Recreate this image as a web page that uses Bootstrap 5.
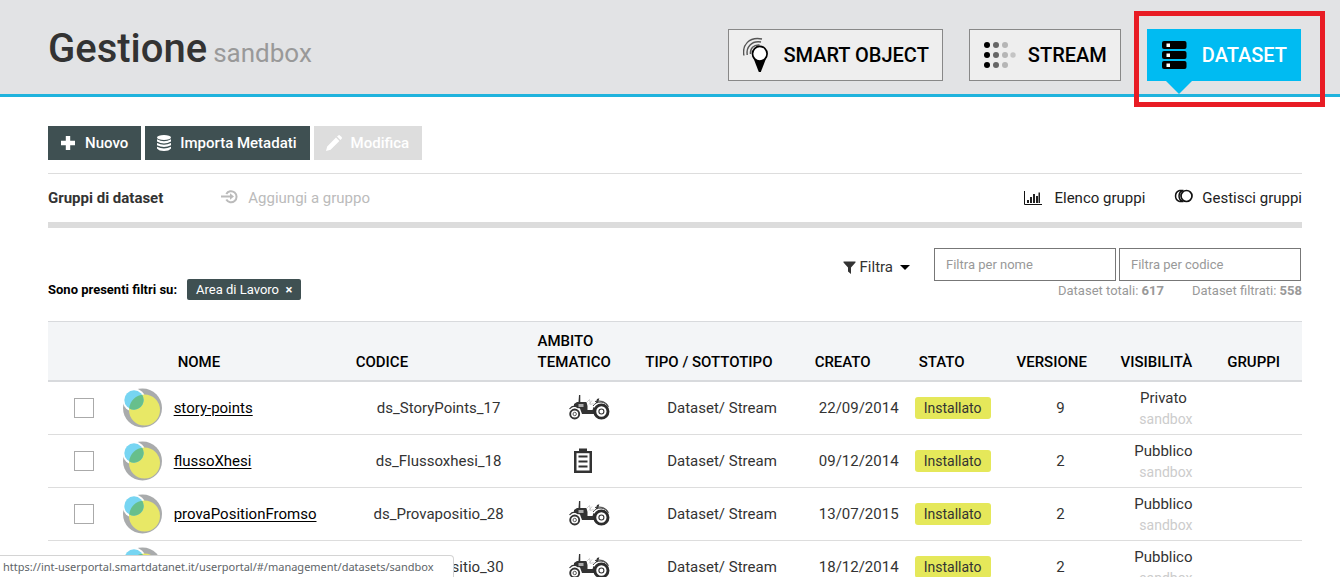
<!DOCTYPE html>
<html lang="it">
<head>
<meta charset="utf-8">
<meta name="viewport" content="width=device-width, initial-scale=1">
<title>Gestione dataset</title>
<link href="https://cdn.jsdelivr.net/npm/bootstrap@5.3.0/dist/css/bootstrap.min.css" rel="stylesheet">
<style>
html { scrollbar-width: none; }
body { font-family: Roboto, "Liberation Sans", sans-serif; font-size: 15px; line-height: 20px; color: #333; background: #fff; }
svg { flex: none; }
.page-pad { padding-left: 48px; padding-right: 38px; }
.page-head { background: #e2e3e5; border-bottom: 3px solid #1fb3dd; height: 97px; }
.page-title { display: flex; align-items: baseline; gap: 6px; font-size: 40px; line-height: 44px; font-weight: 500; color: #333; padding-top: 27px; }
.page-title small { font-size: 26px; font-weight: 400; color: #999; }
.section-tabs { gap: 26px; padding-top: 29px; padding-right: 1px; }
.tab-btn { display: flex; align-items: center; gap: 12px; height: 52px; padding: 0 13px 0 14px; border: 1px solid #888; border-radius: 0; background: #eee; color: #000; font-size: 20px; font-weight: 500; }
.tab-btn.current { background: #00bbf2; border-color: #00bbf2; color: #fff; }
.tab-arrow { position: absolute; top: 52px; left: 19px; border: 13px solid transparent; border-bottom: 0; border-top-color: #00bbf2; }
.focus-frame { position: absolute; inset: -18px -24px -26px -13px; border: 5px solid #e81c24; pointer-events: none; }
.tool-row { padding: 29px 0 13px; }
.tool-btn { display: flex; align-items: center; gap: 8px; height: 34px; padding: 0 13px 0 12px; border: 0; border-radius: 0; background: #3f5052; color: #fff; font-size: 15px; font-weight: 500; }
.tool-btn svg { margin-right: 1px; }
.tool-btn:disabled { background: #ddd; color: #fff; opacity: 1; }
.group-bar { height: 55px; border-top: 1px solid #ddd; border-bottom: 6px solid #dcdcdc; }
.group-bar a { color: #222; text-decoration: none; display: flex; align-items: center; gap: 9px; }
.group-bar a.off { color: #bbb; margin-left: 58px; }
.group-links { gap: 28px; }
.group-links a:first-child { gap: 12px; }
.filter-row { margin-top: 20px; margin-bottom: 21px; }
.filter-on { font-size: 13px; font-weight: 700; color: #000; gap: 10px; }
.filter-tag { background: #3f5052; color: #fff; border: 0; border-radius: 2px; font-size: 13px; height: 21px; padding: 0 9px; }
.filter-menu { border: 0; background: none; color: #333; padding: 0; margin-right: 24px; height: 38px; gap: 4px; }
.filter-menu.dropdown-toggle::after { margin-left: 3px; border-width: 5px; border-bottom: 0; color: #000; vertical-align: 0; }
.filter-inputs { gap: 3px; padding-right: 1px; }
.filter-input { width: 182px; height: 33px; border: 1px solid #777; border-radius: 0; font-size: 13px; padding: 0 11px; }
.filter-input::placeholder { color: #999; }
.totals { font-size: 13px; line-height: 19px; color: #999; gap: 28px; }
.data-grid { table-layout: fixed; margin: 0; color: #333; border-color: #ddd; text-align: center; }
.data-grid th { background: #f3f5f7; color: #000; font-weight: 500; line-height: 21px; text-align: left; vertical-align: bottom; padding: 9px 0 7px 8px; border-top: 1px solid #d8dadd; border-bottom: 2px solid #d8dadd; }
.data-grid td { height: 53px; padding: 0; vertical-align: middle; border-bottom: 1px solid #ddd; white-space: nowrap; }
.data-grid .logo-cell { padding-right: 5px; }
.data-grid .nome { text-align: left; padding-left: 4px; }
.data-grid .nome a { color: #000; text-underline-offset: 2px; }
.data-grid .stato { text-align: left; padding-left: 4px; }
.data-grid .vis { padding: 2px 5px 0 0; }
.pick { appearance: none; width: 20px; height: 20px; border: 1px solid #aaa; background: #fff; display: block; margin: 0 auto; }
.pick:checked { background: #3f5052; }
.topic { display: flex; width: 28px; margin: 0 auto; }
.state-pill { display: inline-block; background: #e5e85a; border-radius: 3px; font-size: 14px; line-height: 22px; padding: 0 9px; color: #333; }
.owner { display: block; font-size: 14px; color: #ccc; line-height: 22px; padding-left: 5px; }
.link-hint { left: 0; bottom: 0; height: 22px; padding: 0 19px 0 3px; font: 11px/22px "Noto Sans", sans-serif; color: #606468; background: #fff; border: 1px solid #d4d4d4; border-width: 1px 1px 0 0; border-radius: 0 4px 0 0; }
.c1 { width: 5.7%; } .c2 { width: 4%; } .c3 { width: 14.2%; } .c4 { width: 14.5%; } .c5 { width: 8.6%; } .c6 { width: 13.5%; }
.c7 { width: 8.3%; } .c8 { width: 7.8%; } .c9 { width: 8.3%; } .c10 { width: 8.5%; } .c11 { width: 6.6%; }
</style>
</head>
<body>
<svg class="d-none" aria-hidden="true">
  <symbol id="i-ds" viewBox="0 0 40 40">
    <circle cx="20.500" cy="20" r="19.500" fill="#a9abac"/>
    <circle cx="12" cy="12" r="11.500" fill="#fff"/>
    <circle cx="22.500" cy="22" r="15.500" fill="#e8e866"/>
    <circle cx="12" cy="12" r="9.700" fill="#77d5f2"/>
    <path d="M21.600 6.500A15.500 15.500 0 0 0 7.200 20.400 9.700 9.700 0 0 0 21.700 12 9.700 9.700 0 0 0 20.200 6.700Z" fill="#67bf8c"/>
  </symbol>
  <symbol id="i-tractor" viewBox="0 0 41 25">
    <path d="M10 0h1.300v7H9.500zM5 9l3-2h9.500l1 4v4h5l1-3 3 2v5H13L11 13.500 7 12H5zM28 4l2.300-.8L29 8h-2.200z" fill="#333"/>
    <path d="M9.500 9h5v3h-5z" fill="#aaa"/>
    <path d="M17.500 7.500 20.500 4.500l1 5 3-1M20 9.500l3-4" fill="none" stroke="#bbb" stroke-width=".7"/>
    <path d="M24 11a9 9 0 0 1 15.500 1M26 6.500q9-2 13 4" fill="none" stroke="#444" stroke-width="1"/>
    <path d="M.5 14q4-5 9-1" fill="none" stroke="#333" stroke-width="1.200"/>
    <circle cx="5.700" cy="19" r="4.500" fill="#fff" stroke="#333" stroke-width="1.900"/>
    <circle cx="5.700" cy="19" r="1.700" fill="#fff" stroke="#333" stroke-width=".8"/>
    <circle cx="32.400" cy="16.500" r="6.600" fill="#fff" stroke="#2c2c2c" stroke-width="2.900"/>
    <circle cx="32.400" cy="16.500" r="2.500" fill="#fff" stroke="#333" stroke-width="1.100"/>
  </symbol>
  <symbol id="i-clip" viewBox="0 0 20 26">
    <path d="M1 3h18v22H1zM6 .5h8V3H6z" fill="#333"/>
    <path d="M3.500 5.200h13v17.300h-13z" fill="#fff"/>
    <path d="M5.500 8.500h9M5.500 13.500h9M5.500 18.500h9" stroke="#333" stroke-width="2.200"/>
  </symbol>
</svg>

<header class="page-head page-pad d-flex justify-content-between">
  <h1 class="page-title m-0">Gestione <small>sandbox</small></h1>
  <nav class="section-tabs d-flex align-items-start" aria-label="Sezioni">
    <button type="button" class="tab-btn">
      <svg width="28" height="36" viewBox="0 0 28 36"><g fill="none" stroke="#555" stroke-width="1.400"><path d="M.9 18.500C-1 8 6 -.5 19 2"/><path d="M4.200 18C3 10 8.500 3.500 18 5"/><path d="M7.400 17C7 11.500 10.500 7.500 16.500 8"/></g><path d="M9.800 19.500h14l-6 15.500h-2z" fill="#000"/><circle cx="16.800" cy="16.700" r="7.300" fill="#fff" stroke="#000" stroke-width="1.700"/></svg>
      SMART OBJECT
    </button>
    <button type="button" class="tab-btn">
      <svg width="32" height="28" viewBox="0 0 32 28"><g fill="#000"><circle cx="3" cy="4" r="3"/><circle cx="3" cy="14" r="3"/><circle cx="3" cy="24" r="3"/></g><g fill="#666"><circle cx="12" cy="4" r="3"/><circle cx="12" cy="14" r="3"/><circle cx="12" cy="24" r="3"/></g><g fill="#b5b5b5"><circle cx="21" cy="4" r="3"/><circle cx="21" cy="14" r="3"/><circle cx="21" cy="24" r="3"/></g><circle cx="29" cy="14" r="2.700" fill="#c4c4c4"/></svg>
      STREAM
    </button>
    <div class="position-relative">
      <button type="button" class="tab-btn current" aria-current="page">
        <svg width="28" height="28" viewBox="0 0 28 28"><g fill="#000"><rect y="0" width="24.500" height="8" rx="2"/><rect y="10" width="24.500" height="8" rx="2"/><rect y="20" width="24.500" height="8" rx="2"/></g><path d="M4.500 2.500H8V6H4.500zM4.500 12.500H8V16H4.500zM4.500 22.500H8V26H4.500z" fill="#fff"/></svg>
        DATASET
      </button>
      <span class="tab-arrow"></span>
      <span class="focus-frame"></span>
    </div>
  </nav>
</header>

<main class="page-pad">
  <div class="tool-row d-flex gap-1">
    <button type="button" class="tool-btn"><svg width="16" height="16" viewBox="0 0 16 16"><path d="M5.800 1h4.400v4.800H15v4.400h-4.800V15H5.800v-4.800H1V5.800h4.800z" fill="#fff"/></svg>Nuovo</button>
    <button type="button" class="tool-btn"><svg width="14" height="16" viewBox="0 0 14 16"><g fill="#fff"><ellipse cx="7" cy="2.500" rx="7" ry="2.500"/><path d="M0 4.300Q7 8 14 4.300V6.500Q7 10.300 0 6.500zM0 8Q7 11.600 14 8v2.200q-7 3.600-14 0zM0 11.700q7 3.600 14 0V13.500q-2 2.500-7 2.500T0 13.500z"/></g></svg>Importa Metadati</button>
    <button type="button" class="tool-btn" disabled><svg width="16" height="16" viewBox="0 0 16 16"><path d="M0 16l1.200-4.600L10 2.600 13.400 6l-8.800 8.800zM11 1.600 12.300.4q.8-.7 1.600 0l1.700 1.700q.7.800 0 1.600L14.400 5z" fill="#fff"/></svg>Modifica</button>
  </div>

  <div class="group-bar d-flex align-items-center">
    <strong class="fw-bold">Gruppi di dataset</strong>
    <a href="#" class="off" aria-disabled="true"><svg width="18" height="18" viewBox="0 0 18 18"><g fill="none" stroke="#bbb" stroke-width="2"><path d="M5.300 5A5.500 5.500 0 1 1 5.300 10.500M0 7.500h11"/></g><path d="M9 4.200 13 7.500 9 10.800z" fill="#bbb"/></svg>Aggiungi a gruppo</a>
    <div class="group-links d-flex ms-auto">
      <a href="#"><svg width="18" height="14" viewBox="0 0 18 14"><path d="M.5 0v13.500H18" fill="none" stroke="#111"/><path d="M3 9h2v3H3zM6 6h2v6H6zM9 3h2v9H9zM12 5h2v7h-2zM14.500 1.500H16V12h-1.500z" fill="#222"/></svg>Elenco gruppi</a>
      <a href="#"><svg width="20" height="18" viewBox="0 0 20 18"><g fill="none" stroke="#111"><circle cx="13.500" cy="7" r="5.500" stroke-width="1.700"/><path d="M10 1.500a5.800 5.800 0 0 0 0 11M6.500 1.500a5.800 5.800 0 0 0 0 11M10.500 1.500H6.500M10.500 12.500h-4" stroke-width="1.500"/></g></svg>Gestisci gruppi</a>
    </div>
  </div>

  <div class="filter-row d-flex align-items-end justify-content-between">
    <div class="filter-on d-flex align-items-center">Sono presenti filtri su:
      <button type="button" class="filter-tag">Area di Lavoro&nbsp; <b>×</b></button>
    </div>
    <div class="d-flex">
      <button type="button" class="filter-menu dropdown-toggle d-flex align-items-center"><svg width="13" height="13" viewBox="0 0 13 13"><path d="M.5.5h12v1L8 6.500V13L5 10.500v-4L.5 1.500z" fill="#333"/></svg>Filtra</button>
      <div>
        <div class="filter-inputs d-flex">
          <input class="filter-input" type="text" placeholder="Filtra per nome" aria-label="Filtra per nome">
          <input class="filter-input" type="text" placeholder="Filtra per codice" aria-label="Filtra per codice">
        </div>
        <div class="totals d-flex justify-content-end"><span>Dataset totali: <b>617</b></span><span>Dataset filtrati: <b>558</b></span></div>
      </div>
    </div>
  </div>

  <table class="data-grid w-100">
    <colgroup><col class="c1"><col class="c2"><col class="c3"><col class="c4"><col class="c5"><col class="c6"><col class="c7"><col class="c8"><col class="c9"><col class="c10"><col class="c11"></colgroup>
    <thead>
      <tr><th></th><th></th><th>NOME</th><th>CODICE</th><th>AMBITO TEMATICO</th><th>TIPO / SOTTOTIPO</th><th>CREATO</th><th>STATO</th><th>VERSIONE</th><th>VISIBILITÀ</th><th>GRUPPI</th></tr>
    </thead>
    <tbody>
      <tr>
        <td><input type="checkbox" class="pick" aria-label="Seleziona story-points"></td>
        <td class="logo-cell"><svg width="40" height="40"><use href="#i-ds"/></svg></td>
        <td class="nome"><a href="#">story-points</a></td>
        <td>ds_StoryPoints_17</td>
        <td><span class="topic"><svg width="41" height="25"><use href="#i-tractor"/></svg></span></td>
        <td>Dataset/ Stream</td><td>22/09/2014</td>
        <td class="stato"><span class="state-pill">Installato</span></td><td>9</td>
        <td class="vis">Privato<span class="owner">sandbox</span></td><td></td>
      </tr>
      <tr>
        <td><input type="checkbox" class="pick" aria-label="Seleziona flussoXhesi"></td>
        <td class="logo-cell"><svg width="40" height="40"><use href="#i-ds"/></svg></td>
        <td class="nome"><a href="#">flussoXhesi</a></td>
        <td>ds_Flussoxhesi_18</td>
        <td><span class="topic justify-content-center"><svg width="20" height="26"><use href="#i-clip"/></svg></span></td>
        <td>Dataset/ Stream</td><td>09/12/2014</td>
        <td class="stato"><span class="state-pill">Installato</span></td><td>2</td>
        <td class="vis">Pubblico<span class="owner">sandbox</span></td><td></td>
      </tr>
      <tr>
        <td><input type="checkbox" class="pick" aria-label="Seleziona provaPositionFromso"></td>
        <td class="logo-cell"><svg width="40" height="40"><use href="#i-ds"/></svg></td>
        <td class="nome"><a href="#">provaPositionFromso</a></td>
        <td>ds_Provapositio_28</td>
        <td><span class="topic"><svg width="41" height="25"><use href="#i-tractor"/></svg></span></td>
        <td>Dataset/ Stream</td><td>13/07/2015</td>
        <td class="stato"><span class="state-pill">Installato</span></td><td>2</td>
        <td class="vis">Pubblico<span class="owner">sandbox</span></td><td></td>
      </tr>
      <tr>
        <td></td>
        <td class="logo-cell"><svg width="40" height="40"><use href="#i-ds"/></svg></td>
        <td></td>
        <td>ds_Provapositio_30</td>
        <td><span class="topic"><svg width="41" height="25"><use href="#i-tractor"/></svg></span></td>
        <td>Dataset/ Stream</td><td>18/12/2014</td>
        <td class="stato"><span class="state-pill">Installato</span></td><td>2</td>
        <td class="vis">Pubblico<span class="owner">sandbox</span></td><td></td>
      </tr>
    </tbody>
  </table>
</main>
<div class="link-hint position-fixed">https://int-userportal.smartdatanet.it/userportal/#/management/datasets/sandbox</div>
<script src="https://cdn.jsdelivr.net/npm/bootstrap@5.3.0/dist/js/bootstrap.bundle.min.js"></script>
</body>
</html>
